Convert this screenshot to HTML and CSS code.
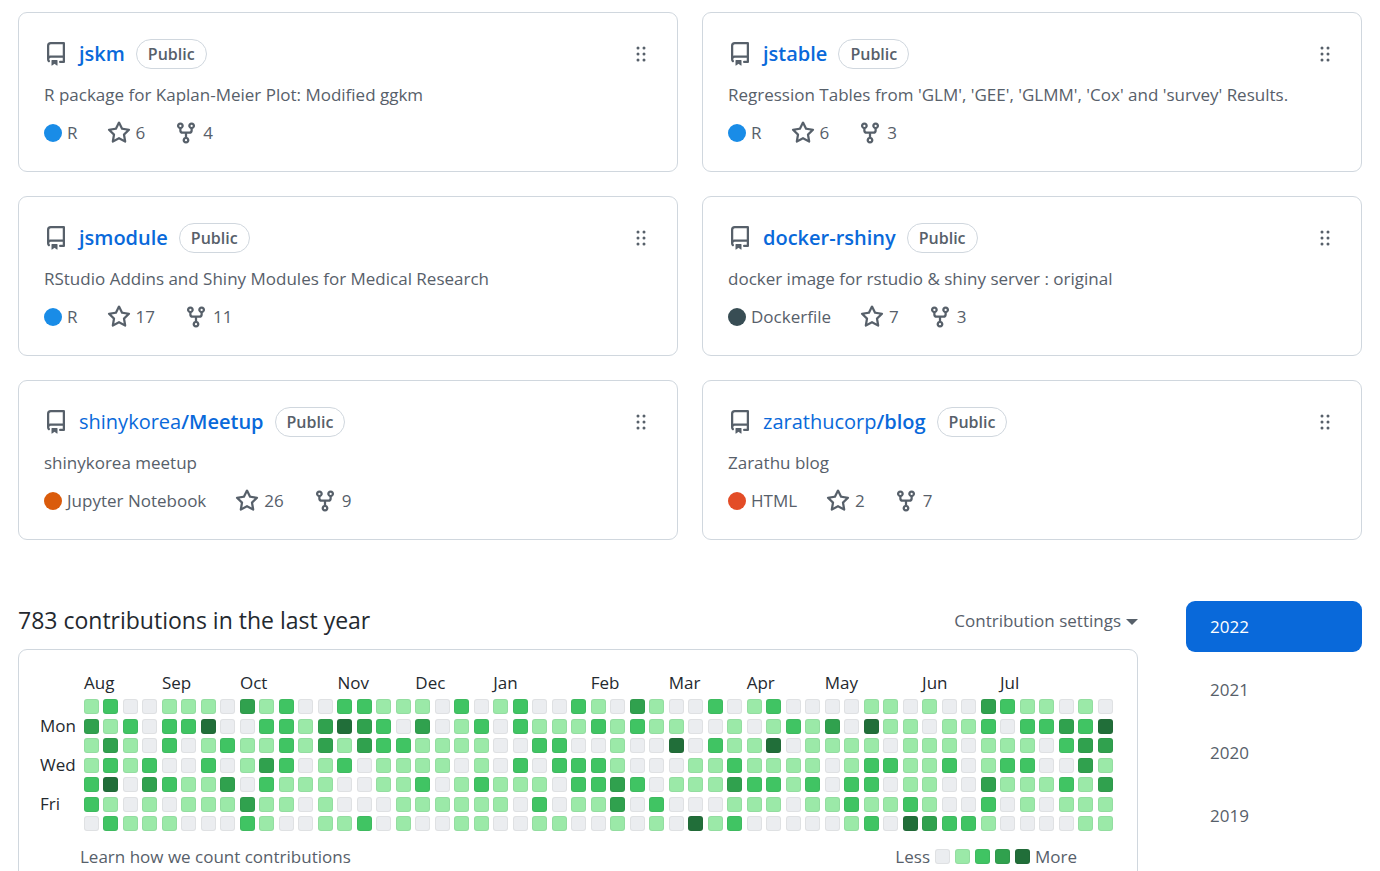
FILE: index.html
```html
<!DOCTYPE html>
<html lang="en">
<head>
<meta charset="utf-8">
<title>Pinned repositories and contributions</title>
<link rel="stylesheet" href="styles.css">
</head>
<body>
<svg class="sprite" aria-hidden="true">
  <symbol id="repo" viewBox="0 0 16 16"><path fill-rule="evenodd" d="M2 2.5A2.5 2.5 0 014.500 0h8.750a.75.75 0 01.75.75v12.500a.75.75 0 01-.75.75h-2.500a.75.75 0 110-1.500h1.750v-2h-8a1 1 0 00-.714 1.700.75.75 0 01-1.072 1.050A2.495 2.495 0 012 11.500v-9zm10.500-1V9h-8c-.356 0-.694.074-1 .208V2.500a1 1 0 011-1h8zM5 12.250v3.250a.25.25 0 00.4.2l1.450-1.087a.25.25 0 01.3 0L8.600 15.700a.25.25 0 00.4-.2v-3.250a.25.25 0 00-.25-.25h-3.500a.25.25 0 00-.25.25z"/></symbol>
  <symbol id="star" viewBox="0 0 16 16"><path fill-rule="evenodd" d="M8 .25a.75.75 0 01.673.418l1.882 3.815 4.210.612a.75.75 0 01.416 1.279l-3.046 2.970.719 4.192a.75.75 0 01-1.088.791L8 12.347l-3.766 1.980a.75.75 0 01-1.088-.790l.720-4.194L.818 6.374a.75.75 0 01.416-1.280l4.210-.611L7.327.668A.75.75 0 018 .25zm0 2.445L6.615 5.500a.75.75 0 01-.564.410l-3.097.450 2.240 2.184a.75.75 0 01.216.664l-.528 3.084 2.769-1.456a.75.75 0 01.698 0l2.770 1.456-.530-3.084a.75.75 0 01.216-.664l2.240-2.183-3.096-.450a.75.75 0 01-.564-.410L8 2.694v.001z"/></symbol>
  <symbol id="fork" viewBox="0 0 16 16"><path fill-rule="evenodd" d="M5 3.250a.75.75 0 11-1.500 0 .75.75 0 011.500 0zm0 2.122a2.250 2.250 0 10-1.500 0v.878A2.250 2.250 0 005.750 8.500h1.500v2.128a2.251 2.251 0 101.500 0V8.500h1.500a2.250 2.250 0 002.250-2.250v-.878a2.250 2.250 0 10-1.500 0v.878a.75.75 0 01-.75.75h-4.500A.75.75 0 015 6.250v-.878zm3.750 7.378a.75.75 0 11-1.500 0 .75.75 0 011.500 0zm3-8.750a.75.75 0 100-1.500.75.75 0 000 1.500z"/></symbol>
  <symbol id="grip" viewBox="0 0 16 16"><path fill-rule="evenodd" d="M10 13a1 1 0 100-2 1 1 0 000 2zm-4 0a1 1 0 100-2 1 1 0 000 2zm1-5a1 1 0 11-2 0 1 1 0 012 0zm3 1a1 1 0 100-2 1 1 0 000 2zm1-5a1 1 0 11-2 0 1 1 0 012 0zM6 5a1 1 0 100-2 1 1 0 000 2z"/></symbol>
</svg>
<main class="page">
  <section class="pins" aria-label="Pinned repositories">
    <article class="card">
      <div class="card-head"><svg class="icon"><use href="#repo"/></svg><a class="name" href="#"><b>jskm</b></a><span class="pill">Public</span><button class="grip" aria-label="Reorder"><svg class="icon"><use href="#grip"/></svg></button></div>
      <p class="desc">R package for Kaplan-Meier Plot: Modified ggkm</p>
      <div class="meta"><span class="lang"><i class="dot r"></i>R</span><a href="#"><svg class="icon"><use href="#star"/></svg>6</a><a href="#"><svg class="icon"><use href="#fork"/></svg>4</a></div>
    </article>
    <article class="card">
      <div class="card-head"><svg class="icon"><use href="#repo"/></svg><a class="name" href="#"><b>jstable</b></a><span class="pill">Public</span><button class="grip" aria-label="Reorder"><svg class="icon"><use href="#grip"/></svg></button></div>
      <p class="desc">Regression Tables from 'GLM', 'GEE', 'GLMM', 'Cox' and 'survey' Results.</p>
      <div class="meta"><span class="lang"><i class="dot r"></i>R</span><a href="#"><svg class="icon"><use href="#star"/></svg>6</a><a href="#"><svg class="icon"><use href="#fork"/></svg>3</a></div>
    </article>
    <article class="card">
      <div class="card-head"><svg class="icon"><use href="#repo"/></svg><a class="name" href="#"><b>jsmodule</b></a><span class="pill">Public</span><button class="grip" aria-label="Reorder"><svg class="icon"><use href="#grip"/></svg></button></div>
      <p class="desc">RStudio Addins and Shiny Modules for Medical Research</p>
      <div class="meta"><span class="lang"><i class="dot r"></i>R</span><a href="#"><svg class="icon"><use href="#star"/></svg>17</a><a href="#"><svg class="icon"><use href="#fork"/></svg>11</a></div>
    </article>
    <article class="card">
      <div class="card-head"><svg class="icon"><use href="#repo"/></svg><a class="name" href="#"><b>docker-rshiny</b></a><span class="pill">Public</span><button class="grip" aria-label="Reorder"><svg class="icon"><use href="#grip"/></svg></button></div>
      <p class="desc">docker image for rstudio &amp; shiny server : original</p>
      <div class="meta"><span class="lang"><i class="dot docker"></i>Dockerfile</span><a href="#"><svg class="icon"><use href="#star"/></svg>7</a><a href="#"><svg class="icon"><use href="#fork"/></svg>3</a></div>
    </article>
    <article class="card">
      <div class="card-head"><svg class="icon"><use href="#repo"/></svg><a class="name" href="#">shinykorea<b>/Meetup</b></a><span class="pill">Public</span><button class="grip" aria-label="Reorder"><svg class="icon"><use href="#grip"/></svg></button></div>
      <p class="desc">shinykorea meetup</p>
      <div class="meta"><span class="lang"><i class="dot jupyter"></i>Jupyter Notebook</span><a href="#"><svg class="icon"><use href="#star"/></svg>26</a><a href="#"><svg class="icon"><use href="#fork"/></svg>9</a></div>
    </article>
    <article class="card">
      <div class="card-head"><svg class="icon"><use href="#repo"/></svg><a class="name" href="#">zarathucorp<b>/blog</b></a><span class="pill">Public</span><button class="grip" aria-label="Reorder"><svg class="icon"><use href="#grip"/></svg></button></div>
      <p class="desc">Zarathu blog</p>
      <div class="meta"><span class="lang"><i class="dot html"></i>HTML</span><a href="#"><svg class="icon"><use href="#star"/></svg>2</a><a href="#"><svg class="icon"><use href="#fork"/></svg>7</a></div>
    </article>
  </section>

  <section class="activity">
    <div class="contrib">
      <header class="contrib-head">
        <h2>783 contributions in the last year</h2>
        <button class="settings">Contribution settings<i class="caret"></i></button>
      </header>
      <div class="panel">
        <div class="calendar">
          <div class="months" id="months"></div>
          <div class="weekdays"><span class="mon">Mon</span><span class="wed">Wed</span><span class="fri">Fri</span></div>
          <div class="days" id="days" role="img" aria-label="Contribution calendar"></div>
        </div>
        <footer class="panel-foot">
          <a href="#">Learn how we count contributions</a>
          <div class="legend"><span>Less</span><i class="day l0"></i><i class="day l1"></i><i class="day l2"></i><i class="day l3"></i><i class="day l4"></i><span>More</span></div>
        </footer>
      </div>
    </div>
    <nav class="years" aria-label="Year">
      <a class="year current" href="#">2022</a>
      <a class="year" href="#">2021</a>
      <a class="year" href="#">2020</a>
      <a class="year" href="#">2019</a>
    </nav>
  </section>
</main>
<script src="calendar.js"></script>
</body>
</html>
```

FILE: styles.css
```css
* { box-sizing: border-box; }

body {
  margin: 0;
  background: #fff;
  color: #24292f;
  font: 17px/27px "Open Sans", "Noto Sans", sans-serif;
}

a { color: inherit; text-decoration: none; }
button { padding: 0; border: 0; background: none; color: inherit; font: inherit; cursor: pointer; }
h2, p { margin: 0; }

.sprite { position: absolute; width: 0; height: 0; }
.icon { width: 24px; height: 24px; flex: none; fill: #57606a; }
.page { padding: 12px 18px 0; }

/* Pinned repositories */
.pins { display: grid; grid-template-columns: 1fr 1fr; gap: 24px; }
.card { padding: 26px 24px 25px 25px; border: 1px solid #d0d7de; border-radius: 9px; color: #57606a; }
.card-head { display: flex; align-items: center; height: 30px; }
.name { margin: 0 11px 2px; color: #0969da; font-size: 20px; }
.name b { font-weight: 600; }
.pill { padding: 1px 11px 0; border: 1px solid #d0d7de; border-radius: 15px; font-size: 16px; font-weight: 600; line-height: 27px; }
.grip { display: flex; margin-left: auto; }
.desc { margin-top: 12px; }
.meta { display: flex; align-items: center; gap: 29px; margin-top: 11px; }
.lang, .meta a { display: flex; align-items: center; gap: 5px; }
.dot { width: 18px; height: 18px; border-radius: 50%; }
.dot.r { background: #198ce7; }
.dot.docker { background: #384d54; }
.dot.jupyter { background: #da5b0b; }
.dot.html { background: #e34c26; }

/* Contribution activity */
.activity { display: grid; grid-template-columns: 1fr 176px; gap: 48px; margin-top: 61px; }
.contrib-head { display: flex; align-items: center; justify-content: space-between; height: 38px; margin-bottom: 10px; }
h2 { font-size: 23px; font-weight: 400; }
.settings { display: flex; align-items: center; gap: 5px; color: #57606a; }
.caret { border: 6px solid transparent; border-top-color: #57606a; border-bottom: 0; margin-top: 4px; }
.panel { padding: 19px 20px 24px 21px; border: 1px solid #d0d7de; border-radius: 9px; }
.calendar { display: grid; grid-template-columns: 44px 1fr; }
.months { grid-column: 2; display: grid; grid-template-columns: repeat(53, minmax(0, 1fr)); height: 30px; white-space: nowrap; }
.weekdays, .days { display: grid; grid-template-rows: repeat(7, 1fr); height: 137px; }
.weekdays { line-height: 14px; }
.mon { grid-row: 2; }
.wed { grid-row: 4; }
.fri { grid-row: 6; }
.days { grid-template-columns: repeat(53, minmax(0, 1fr)); grid-auto-flow: column; }
.day { width: 15px; height: 15px; border: 1px solid rgba(27, 31, 35, .06); border-radius: 3px; }
.l0 { background: #ebedf0; }
.l1 { background: #9be9a8; }
.l2 { background: #40c463; }
.l3 { background: #30a14e; }
.l4 { background: #216e39; }
.panel-foot { display: flex; align-items: center; justify-content: space-between; margin: 7px 40px 0; color: #57606a; }
.legend { display: flex; align-items: center; gap: 5px; }

.years { display: flex; flex-direction: column; gap: 12px; }
.year { padding: 12px 24px; border-radius: 9px; color: #57606a; }
.current { background: #0969da; color: #fff; }
```

FILE: calendar.js
```js
// One row per weekday (Sunday first), one digit per week: activity level 0-4.
const levels = [
  "1200111031200" + "22111020120021" + "0310020120000" + "1101003211010",
  "3120224002213" + "43203012021112" + "1211001012130" + "4110112022324",
  "1310201211213" + "13221111002200" + "1004021140111" + "1011101110233",
  "1212002013201" + "20111101020222" + "1000112111101" + "2211201220031",
  "2403211302111" + "00112012111022" + "3201113221202" + "2011003111213",
  "2101011131101" + "00011111102011" + "3020001110112" + "1121002010111",
  "0211100021001" + "12010011001100" + "1010412000001" + "2043221000011",
];

const months = { Aug: 1, Sep: 5, Oct: 9, Nov: 14, Dec: 18, Jan: 22, Feb: 27, Mar: 31, Apr: 35, May: 39, Jun: 44, Jul: 48 };

const monthRow = document.getElementById("months");
for (const [name, column] of Object.entries(months)) {
  const label = document.createElement("span");
  label.textContent = name;
  label.style.gridColumn = column;
  monthRow.append(label);
}

const days = document.getElementById("days");
for (let week = 0; week < 53; week++) {
  for (const row of levels) {
    const day = document.createElement("i");
    day.className = "day l" + row[week];
    days.append(day);
  }
}
```
